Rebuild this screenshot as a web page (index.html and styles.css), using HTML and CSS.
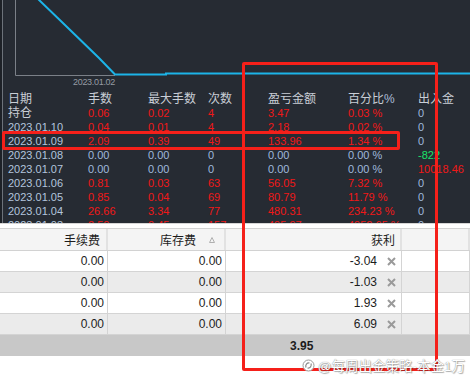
FILE: index.html
```html
<!DOCTYPE html>
<html lang="zh-CN">
<head>
  <meta charset="UTF-8" />
  <title>Report</title>
  <link rel="stylesheet" href="styles.css">
</head>
<body>

<div class="report">
  <svg class="chart" width="470" height="92" viewBox="0 0 470 92">
    <path d="M15.5 0 V75.5 H115" fill="none" stroke="#7b8088" stroke-width="1"/>
    <polyline points="37,-2 66,26 99,58 115,74.5 166,74.5 166,73.5 470,73.5" fill="none" stroke="#1cb4e8" stroke-width="2"/>
    <text x="94" y="85" text-anchor="middle" class="axis-label">2023.01.02</text>
  </svg>

  <div class="stats">
    <div class="row head"><span>日期</span><span>手数</span><span>最大手数</span><span>次数</span><span>盈亏金额</span><span>百分比<em>%</em></span><span>出入金</span></div>
    <div class="row"><span class="head">持仓</span><span class="r">0.06</span><span class="r">0.02</span><span class="r">4</span><span class="r">3.47</span><span class="r">0.03 %</span><span class="b">0</span></div>
    <div class="row"><span class="d">2023.01.10</span><span class="r">0.04</span><span class="r">0.01</span><span class="r">4</span><span class="r">2.18</span><span class="r">0.02 %</span><span class="b">0</span></div>
    <div class="row"><span class="d">2023.01.09</span><span class="r">2.09</span><span class="r">0.39</span><span class="r">49</span><span class="r">133.96</span><span class="r">1.34 %</span><span class="b">0</span></div>
    <div class="row"><span class="d">2023.01.08</span><span class="b">0.00</span><span class="b">0.00</span><span class="b">0</span><span class="b">0.00</span><span class="b">0.00 %</span><span class="g">-822</span></div>
    <div class="row"><span class="d">2023.01.07</span><span class="b">0.00</span><span class="b">0.00</span><span class="b">0</span><span class="b">0.00</span><span class="b">0.00 %</span><span class="r">10018.46</span></div>
    <div class="row"><span class="d">2023.01.06</span><span class="r">0.81</span><span class="r">0.03</span><span class="r">63</span><span class="r">56.05</span><span class="r">7.32 %</span><span class="b">0</span></div>
    <div class="row"><span class="d">2023.01.05</span><span class="r">0.85</span><span class="r">0.04</span><span class="r">69</span><span class="r">80.79</span><span class="r">11.79 %</span><span class="b">0</span></div>
    <div class="row"><span class="d">2023.01.04</span><span class="r">26.66</span><span class="r">3.34</span><span class="r">77</span><span class="r">480.31</span><span class="r">234.23 %</span><span class="b">0</span></div>
    <div class="row"><span class="d">2023.01.03</span><span class="r">2.50</span><span class="r">0.45</span><span class="r">157</span><span class="r">495.97</span><span class="r">4952.65 %</span><span class="b">0</span></div>
  </div>
</div>

<div class="grid">
  <div class="grid-head">
    <div class="cell">手续费</div>
    <div class="cell sort">库存费
      <svg width="6" height="6" viewBox="0 0 6 6"><path d="M0.5 5.5 L3 0.5 L5.5 5.5 Z" fill="none" stroke="#b0b0b0" stroke-width="1"/></svg>
    </div>
    <div class="cell profit">获利</div>
    <div class="cell"></div>
  </div>

  <div class="grid-row">
    <div class="cell">0.00</div><div class="cell">0.00</div>
    <div class="cell profit">-3.04 <svg class="close" width="9" height="9" viewBox="0 0 9 9"><path d="M1 1 L8 8 M8 1 L1 8" stroke="#9a9a9a" stroke-width="2"/></svg></div>
    <div class="cell"></div>
  </div>
  <div class="grid-row">
    <div class="cell">0.00</div><div class="cell">0.00</div>
    <div class="cell profit">-1.03 <svg class="close" width="9" height="9" viewBox="0 0 9 9"><path d="M1 1 L8 8 M8 1 L1 8" stroke="#9a9a9a" stroke-width="2"/></svg></div>
    <div class="cell"></div>
  </div>
  <div class="grid-row">
    <div class="cell">0.00</div><div class="cell">0.00</div>
    <div class="cell profit">1.93 <svg class="close" width="9" height="9" viewBox="0 0 9 9"><path d="M1 1 L8 8 M8 1 L1 8" stroke="#9a9a9a" stroke-width="2"/></svg></div>
    <div class="cell"></div>
  </div>
  <div class="grid-row">
    <div class="cell">0.00</div><div class="cell">0.00</div>
    <div class="cell profit">6.09 <svg class="close" width="9" height="9" viewBox="0 0 9 9"><path d="M1 1 L8 8 M8 1 L1 8" stroke="#9a9a9a" stroke-width="2"/></svg></div>
    <div class="cell"></div>
  </div>

  <div class="grid-total">
    <div></div><div></div><div class="total">3.95</div><div></div>
  </div>
</div>

<!-- red highlight boxes drawn over the screenshot -->
<div class="mark mark-col"></div>
<div class="mark mark-row"></div>

<div class="watermark">
  <svg width="13" height="13" viewBox="0 0 13 13"><circle cx="6.5" cy="6.5" r="5.5" fill="#fff" stroke="#9a9a9a" stroke-width="1"/><path d="M4 8.5 C3 6 5 3.5 7.5 4 M9 4.5 C10 7 8 9.5 5.5 9" fill="none" stroke="#8a8a8a" stroke-width="1.2"/></svg>
  <span>@每周出金策略-本金1万</span>
</div>

</body>
</html>
```

FILE: styles.css
```css
body {
  margin: 0;
  width: 470px;
  height: 385px;
  overflow: hidden;
  background: #fff;
  font-family: 'Liberation Sans', 'Noto Sans CJK SC', sans-serif;
  position: relative;
}

.report {
  height: 223px;
  overflow: hidden;
  background: linear-gradient(to right, #1d2127 0 2px, #6c727a 2px 3px, #262b33 3px);
}

.chart {
  display: block;
}

.axis-label {
  font-family: 'Liberation Sans', sans-serif;
  font-size: 9px;
  letter-spacing: -0.3px;
  fill: #959ba3;
}

.row {
  display: grid;
  grid-template-columns: 80px 60px 60px 60px 80px 70px 1fr;
  height: 14px;
  line-height: 14px;
  padding-left: 8px;
  font-size: 11px;
  white-space: nowrap;
}

.head {
  color: #c9ced6;
  font-size: 12px;
}

.head em {
  font-style: normal;
  color: #a9bcd8;
}

.d { color: #b3c5dd; }
.r { color: #f01818; }
.b { color: #9fb9dd; }
.g { color: #19e36a; }

.grid {
  border-top: 1px solid #d6d6d6;
  padding-top: 4px;
  font-size: 12px;
  color: #1c1c1c;
}

.grid-head,
.grid-row,
.grid-total {
  display: grid;
  grid-template-columns: 108px 118px 176px 1fr;
}

.grid-head {
  height: 21px;
  background: #f4f4f4;
  border-top: 1px solid #d2d2d2;
  border-bottom: 1px solid #d2d2d2;
}

.grid-head .cell {
  border-right: 2px solid #e2e2e2;
  padding-right: 6px;
}

.grid-head .sort {
  gap: 13px;
  padding-right: 9px;
}

.grid-head .profit {
  padding-right: 5px;
}

.cell {
  display: flex;
  align-items: center;
  justify-content: flex-end;
  border-right: 1px solid #d4d4d4;
  padding-right: 3px;
}

.grid-row {
  height: 21px;
  box-sizing: border-box;
  border-bottom: 1px solid #d4d4d4;
}

.grid-row:nth-child(odd) {
  background: #ebebeb;
}

.grid-row .profit {
  gap: 10px;
  padding-right: 5px;
}

.close {
  flex: none;
}

.grid-total {
  height: 21px;
  background: #c8c8c8;
}

.total {
  display: flex;
  align-items: center;
  padding-left: 64px;
  font-weight: bold;
}

.mark {
  position: absolute;
  border: 3px solid #f5201a;
  border-radius: 2px;
  box-sizing: border-box;
}

.mark-col {
  left: 242px;
  top: 62px;
  width: 196px;
  height: 309px;
}

.mark-row {
  left: 2px;
  top: 131px;
  width: 398px;
  height: 19px;
}

.watermark {
  position: absolute;
  right: 5px;
  top: 355px;
  display: flex;
  align-items: center;
  gap: 3px;
  font-size: 13.5px;
  color: #fff;
  text-shadow: 0 0 1px #6a6a6a, 1px 1px 1px rgba(0,0,0,0.3);
}
```
